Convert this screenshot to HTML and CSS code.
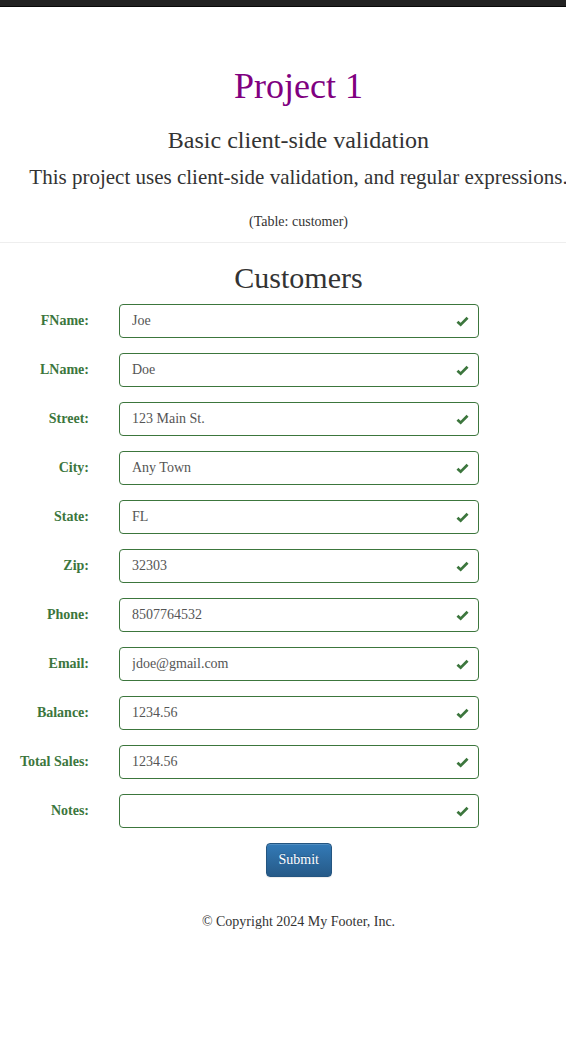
FILE: index.html
```html
<!DOCTYPE html>
<html lang="en">
<head>
<meta charset="utf-8">
<title>Project 1</title>
<link rel="stylesheet" href="styles.css">
</head>
<body>
<div class="navbar"></div>
<div class="page">
  <header class="intro">
    <h1 class="title">Project 1</h1>
    <h3 class="subtitle">Basic client-side validation</h3>
    <p class="lead">This project uses client-side validation, and regular expressions.</p>
    <p class="table-note">(Table: customer)</p>
  </header>
  <hr class="divider">
  <main class="content">
    <h2 class="heading">Customers</h2>
    <form class="form">
      <div class="row"><label class="label">FName:</label><div class="field"><input class="input" value="Joe"><svg class="check" viewBox="0 0 14 12"><path d="M1.5 6.2 L5 9.5 L12.5 2"/></svg></div></div>
      <div class="row"><label class="label">LName:</label><div class="field"><input class="input" value="Doe"><svg class="check" viewBox="0 0 14 12"><path d="M1.5 6.2 L5 9.5 L12.5 2"/></svg></div></div>
      <div class="row"><label class="label">Street:</label><div class="field"><input class="input" value="123 Main St."><svg class="check" viewBox="0 0 14 12"><path d="M1.5 6.2 L5 9.5 L12.5 2"/></svg></div></div>
      <div class="row"><label class="label">City:</label><div class="field"><input class="input" value="Any Town"><svg class="check" viewBox="0 0 14 12"><path d="M1.5 6.2 L5 9.5 L12.5 2"/></svg></div></div>
      <div class="row"><label class="label">State:</label><div class="field"><input class="input" value="FL"><svg class="check" viewBox="0 0 14 12"><path d="M1.5 6.2 L5 9.5 L12.5 2"/></svg></div></div>
      <div class="row"><label class="label">Zip:</label><div class="field"><input class="input" value="32303"><svg class="check" viewBox="0 0 14 12"><path d="M1.5 6.2 L5 9.5 L12.5 2"/></svg></div></div>
      <div class="row"><label class="label">Phone:</label><div class="field"><input class="input" value="8507764532"><svg class="check" viewBox="0 0 14 12"><path d="M1.5 6.2 L5 9.5 L12.5 2"/></svg></div></div>
      <div class="row"><label class="label">Email:</label><div class="field"><input class="input" value="jdoe@gmail.com"><svg class="check" viewBox="0 0 14 12"><path d="M1.5 6.2 L5 9.5 L12.5 2"/></svg></div></div>
      <div class="row"><label class="label">Balance:</label><div class="field"><input class="input" value="1234.56"><svg class="check" viewBox="0 0 14 12"><path d="M1.5 6.2 L5 9.5 L12.5 2"/></svg></div></div>
      <div class="row"><label class="label">Total Sales:</label><div class="field"><input class="input" value="1234.56"><svg class="check" viewBox="0 0 14 12"><path d="M1.5 6.2 L5 9.5 L12.5 2"/></svg></div></div>
      <div class="row"><label class="label">Notes:</label><div class="field"><input class="input" value=""><svg class="check" viewBox="0 0 14 12"><path d="M1.5 6.2 L5 9.5 L12.5 2"/></svg></div></div>
      <div class="actions"><button type="button" class="btn">Submit</button></div>
    </form>
  </main>
  <footer class="footer">© Copyright 2024 My Footer, Inc.</footer>
</div>
</body>
</html>
```
FILE: styles.css
```css
html, body {
  margin: 0;
  padding: 0;
  background: #fff;
  overflow-x: hidden;
}
body {
  font-family: "Liberation Serif", "Times New Roman", serif;
  color: #333;
  font-size: 14px;
  line-height: 1.42857;
}
.navbar {
  height: 6px;
  background: #222;
  border-bottom: 1px solid #080808;
}
.page {
  width: 597px;
}
.intro {
  text-align: center;
  padding-top: 60px;
}
.title {
  margin: 0;
  font-size: 36px;
  font-weight: 400;
  line-height: 1.1;
  color: #800080;
}
.subtitle {
  margin: 20px 0 0;
  font-size: 24px;
  font-weight: 400;
  line-height: 1.1;
}
.lead {
  margin: 10px 0 0;
  font-size: 21px;
  line-height: 1.4;
  white-space: nowrap;
}
.table-note {
  margin: 20px 0 0;
}
.divider {
  margin: 10px 0 0;
  width: 566px;
  border: 0;
  border-top: 1px solid #eee;
}
.content {
  text-align: center;
}
.heading {
  margin: 18px 0 10px;
  font-size: 30px;
  font-weight: 400;
  line-height: 1.1;
}
.form {
  display: flex;
  flex-direction: column;
  gap: 15px;
  text-align: left;
}
.row {
  display: grid;
  grid-template-columns: 89px 360px;
  column-gap: 30px;
  align-items: start;
}
.label {
  text-align: right;
  font-weight: 700;
  color: #3c763d;
  padding-top: 7px;
}
.field {
  position: relative;
}
.input {
  display: block;
  box-sizing: border-box;
  width: 360px;
  height: 34px;
  padding: 6px 12px;
  font-family: inherit;
  font-size: 14px;
  color: #555;
  border: 1px solid #3c763d;
  border-radius: 4px;
  background: #fff;
  outline: none;
}
.check {
  position: absolute;
  right: 10px;
  top: 12px;
  width: 13px;
  height: 11px;
  fill: none;
  stroke: #3c763d;
  stroke-width: 3;
}
.actions {
  display: flex;
  justify-content: center;
}
.btn {
  width: 66px;
  height: 34px;
  font-family: inherit;
  font-size: 14px;
  font-weight: 400;
  color: #fff;
  text-shadow: 0 -1px 0 rgba(0,0,0,.2);
  background: linear-gradient(to bottom, #337ab7 0, #265a88 100%);
  border: 1px solid #245580;
  border-radius: 4px;
  box-shadow: inset 0 1px 0 rgba(255,255,255,.15), 0 1px 1px rgba(0,0,0,.075);
  padding: 6px 12px;
}
.footer {
  text-align: center;
  margin-top: 35px;
}
```
